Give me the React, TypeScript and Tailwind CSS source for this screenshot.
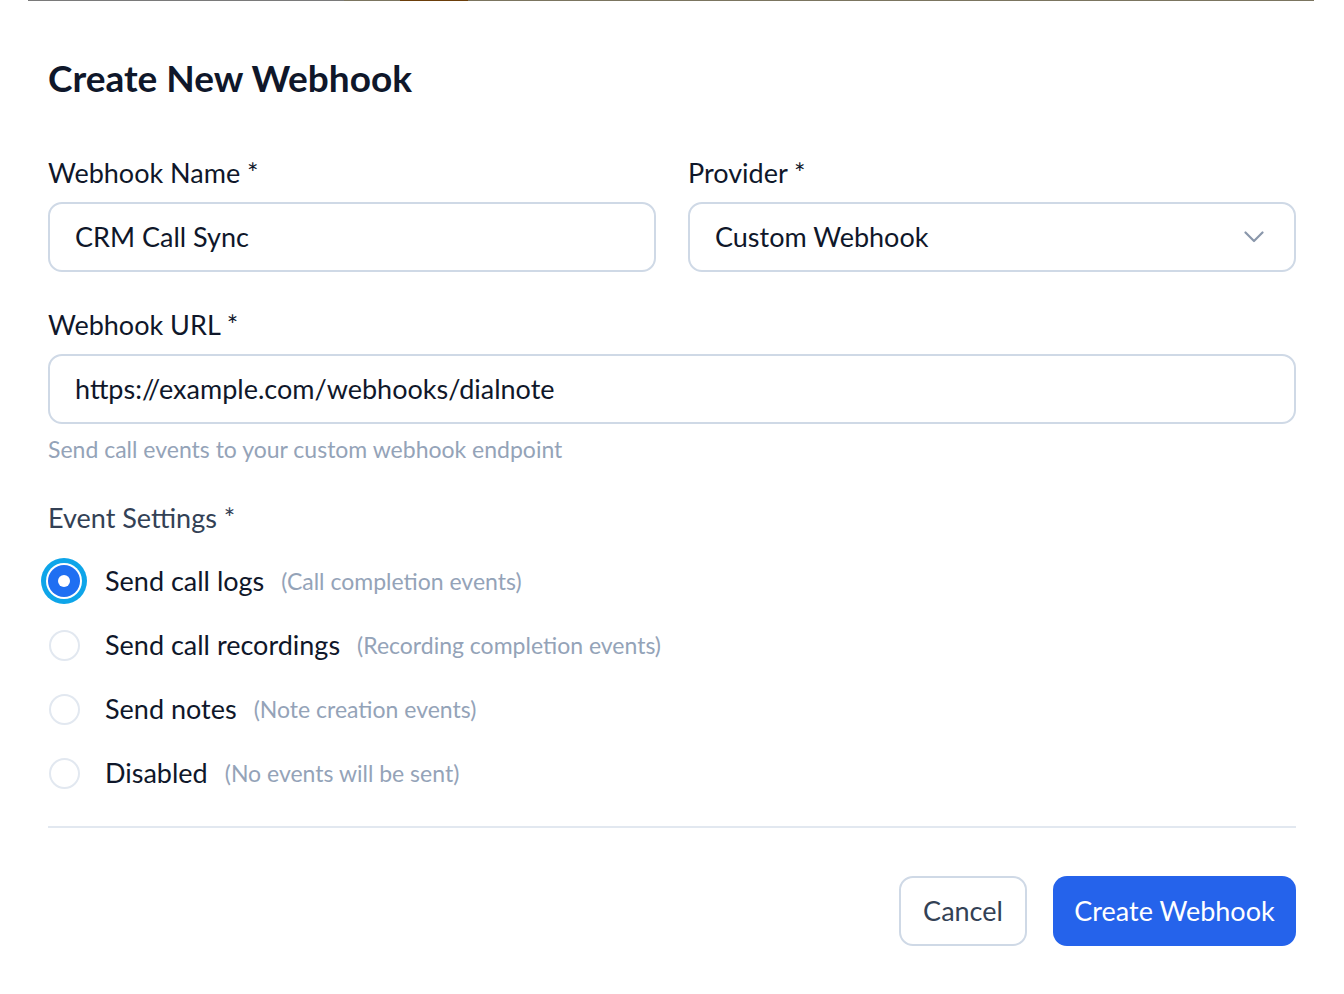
import React from "react";

const font = { fontFamily: "Lato, 'Noto Sans', sans-serif" };

function Radio({ selected, label, hint }: { selected?: boolean; label: string; hint: string }) {
  return (
    <div className="flex items-center h-[40px]">
      <div className="w-[32px] flex justify-center">
        {selected ? (
          <div className="w-[32px] h-[32px] rounded-full bg-[#1f6ff2] flex items-center justify-center ring-[5px] ring-[#0ea5e9] ring-offset-2 ring-offset-white">
            <div className="w-[12px] h-[12px] rounded-full bg-white" />
          </div>
        ) : (
          <div className="w-[31px] h-[31px] rounded-full border-2 border-[#e2e8f0] bg-white" />
        )}
      </div>
      <span className="ml-[25px] text-[27px] leading-[40px] text-[#0f172a]">{label}</span>
      <span className="ml-[17px] text-[23px] leading-[40px] text-[#94a3b8]">{hint}</span>
    </div>
  );
}

export default function App() {
  return (
    <div className="w-[1344px] h-[994px] bg-white relative overflow-hidden" style={font}>
      <div className="absolute top-0 left-[28px] right-[30px] h-[1px] flex">
        <div className="w-[316px] bg-[#7a7a7a]" />
        <div className="w-[56px] bg-[#7b7560]" />
        <div className="w-[68px] bg-[#6b3e0a]" />
        <div className="flex-1 bg-[#7b7560]" />
      </div>
      <div className="px-[48px] pt-[58px] pb-[48px] flex flex-col">
        <h1 className="text-[37px] leading-[40px] font-bold text-[#0f172a]">Create New Webhook</h1>

        <div className="grid grid-cols-2 gap-[32px] mt-[57px]">
          <div className="flex flex-col">
            <label className="text-[27px] leading-[36px] text-[#0f172a]">Webhook Name *</label>
            <div className="mt-[11px] h-[70px] rounded-[14px] border-2 border-[#cfd9e6] flex items-center px-[25px] text-[27px] text-[#0f172a]">
              CRM Call Sync
            </div>
          </div>
          <div className="flex flex-col">
            <label className="text-[27px] leading-[36px] text-[#0f172a]">Provider *</label>
            <div className="mt-[11px] h-[70px] rounded-[14px] border-2 border-[#cfd9e6] flex items-center justify-between pl-[25px] pr-[30px] text-[27px] text-[#0f172a]">
              <span>Custom Webhook</span>
              <svg width="20" height="12" viewBox="0 0 20 12" fill="none">
                <path d="M1.5 1.5 L10 10 L18.5 1.5" stroke="#8a97ab" strokeWidth="2.2" strokeLinecap="round" strokeLinejoin="round" />
              </svg>
            </div>
          </div>
        </div>

        <label className="mt-[35px] text-[27px] leading-[36px] text-[#0f172a]">Webhook URL *</label>
        <div className="mt-[11px] h-[70px] rounded-[14px] border-2 border-[#cfd9e6] flex items-center px-[25px] text-[27px] text-[#0f172a]">
          https://example.com/webhooks/dialnote
        </div>
        <p className="mt-[10px] text-[23px] leading-[30px] text-[#94a3b8]">Send call events to your custom webhook endpoint</p>

        <p className="mt-[36px] text-[27px] leading-[36px] text-[#334155]">Event Settings *</p>

        <div className="mt-[25px] flex flex-col gap-[24px]">
          <Radio selected label="Send call logs" hint="(Call completion events)" />
          <Radio label="Send call recordings" hint="(Recording completion events)" />
          <Radio label="Send notes" hint="(Note creation events)" />
          <Radio label="Disabled" hint="(No events will be sent)" />
        </div>

        <div className="mt-[33px] h-[2px] bg-[#e2e8f0]" />

        <div className="mt-[48px] flex justify-end gap-[26px]">
          <button className="h-[70px] w-[128px] rounded-[14px] border-2 border-[#cfd9e6] bg-white text-[27px] text-[#334155]">Cancel</button>
          <button className="h-[70px] w-[243px] rounded-[14px] bg-[#2563eb] text-[27px] text-white">Create Webhook</button>
        </div>
      </div>
    </div>
  );
}
